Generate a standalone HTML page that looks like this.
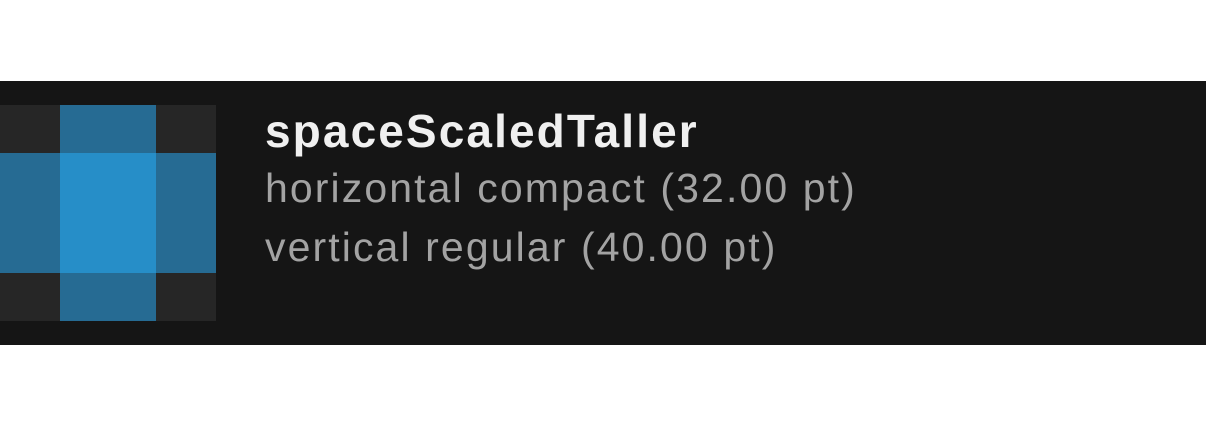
<!DOCTYPE html>
<html><head><style>
body{margin:0;width:1206px;height:426px;background:#fff;position:relative;overflow:hidden;font-family:"Liberation Sans",sans-serif}
.band{position:absolute;left:0;top:81px;width:1206px;height:264px;background:#151515}
.t{position:absolute;}
.d{background:#262626}.m{background:#266b93}.c{background:#268ec8}
.txt{position:absolute;left:265px;white-space:nowrap}
</style></head><body>
<div class="band"></div>
<div class="t d" style="left:0;top:105px;width:60px;height:48px"></div>
<div class="t m" style="left:60px;top:105px;width:96px;height:48px"></div>
<div class="t d" style="left:156px;top:105px;width:60px;height:48px"></div>
<div class="t m" style="left:0;top:153px;width:60px;height:120px"></div>
<div class="t c" style="left:60px;top:153px;width:96px;height:120px"></div>
<div class="t m" style="left:156px;top:153px;width:60px;height:120px"></div>
<div class="t d" style="left:0;top:273px;width:60px;height:48px"></div>
<div class="t m" style="left:60px;top:273px;width:96px;height:48px"></div>
<div class="t d" style="left:156px;top:273px;width:60px;height:48px"></div>
<div class="txt" style="top:106px;font-size:46px;font-weight:bold;color:#f0f0f0;line-height:50px;letter-spacing:2.1px">spaceScaledTaller</div>
<div class="txt" style="top:165px;font-size:41px;color:#a3a3a3;line-height:46px;letter-spacing:2.1px">horizontal compact (32.00 pt)</div>
<div class="txt" style="top:224px;font-size:41px;color:#a3a3a3;line-height:46px;letter-spacing:2.1px">vertical regular (40.00 pt)</div>
</body></html>
